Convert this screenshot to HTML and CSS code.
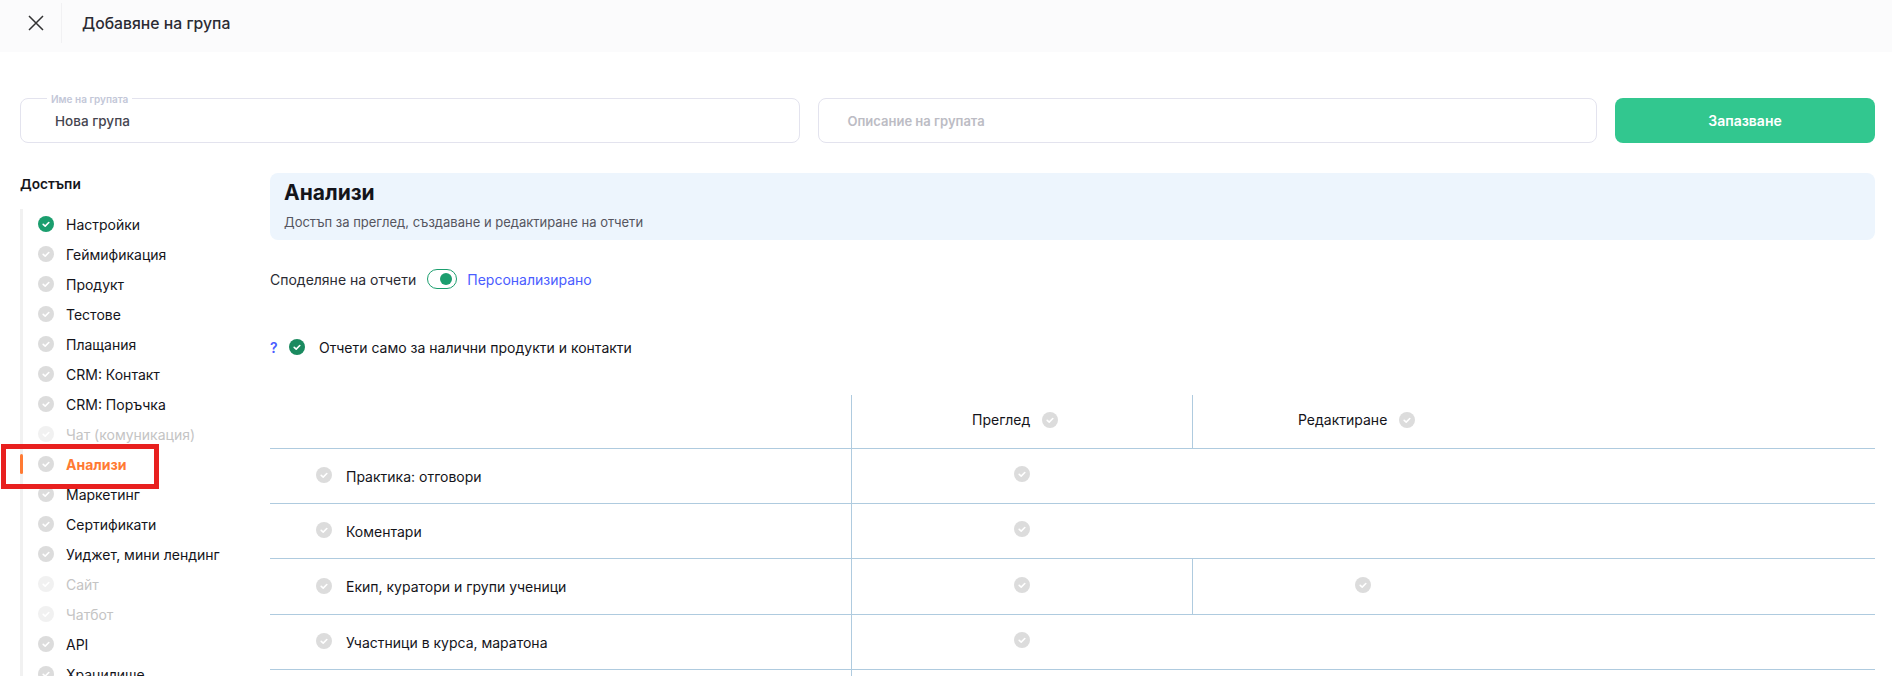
FILE: index.html
```html
<!DOCTYPE html>
<html>
<head>
<meta name="viewport" content="width=device-width, initial-scale=1">
<link rel="stylesheet" href="styles.css">
</head>
<body>

<svg class="defs" width="0" height="0">
  <symbol id="check" viewBox="0 0 16 16">
    <circle cx="8" cy="8" r="8" fill="currentColor"/>
    <path d="M5.2 8.3l2 1.8 3.6-3.6" fill="none" stroke="#fff" stroke-width="1.6" stroke-linecap="round" stroke-linejoin="round"/>
  </symbol>
</svg>

<header class="topbar">
  <div class="close">
    <svg width="16" height="16" viewBox="0 0 16 16"><path d="M1 1l14 14M15 1L1 15" fill="none" stroke="#333" stroke-width="1.5"/></svg>
  </div>
  <div class="topbar-title">Добавяне на група</div>
</header>

<div class="form-row">
  <div class="field">
    <span class="field-label">Име на групата</span>
    <span class="field-value">Нова група</span>
  </div>
  <div class="field">
    <span class="field-placeholder">Описание на групата</span>
  </div>
  <div class="save">Запазване</div>
</div>

<div class="main">
  <aside class="side">
    <div class="side-title">Достъпи</div>
    <ul class="side-list">
      <li><svg class="ic green"><use href="#check"/></svg>Настройки</li>
      <li><svg class="ic"><use href="#check"/></svg>Геймификация</li>
      <li><svg class="ic"><use href="#check"/></svg>Продукт</li>
      <li><svg class="ic"><use href="#check"/></svg>Тестове</li>
      <li><svg class="ic"><use href="#check"/></svg>Плащания</li>
      <li><svg class="ic"><use href="#check"/></svg>CRM: Контакт</li>
      <li><svg class="ic"><use href="#check"/></svg>CRM: Поръчка</li>
      <li class="off"><svg class="ic"><use href="#check"/></svg>Чат (комуникация)</li>
      <li class="active"><svg class="ic"><use href="#check"/></svg>Анализи</li>
      <li><svg class="ic"><use href="#check"/></svg>Маркетинг</li>
      <li><svg class="ic"><use href="#check"/></svg>Сертификати</li>
      <li><svg class="ic"><use href="#check"/></svg>Уиджет, мини лендинг</li>
      <li class="off"><svg class="ic"><use href="#check"/></svg>Сайт</li>
      <li class="off"><svg class="ic"><use href="#check"/></svg>Чатбот</li>
      <li><svg class="ic"><use href="#check"/></svg>API</li>
      <li><svg class="ic"><use href="#check"/></svg>Хранилище</li>
    </ul>
  </aside>

  <section class="content">
    <div class="panel">
      <h2>Анализи</h2>
      <p>Достъп за преглед, създаване и редактиране на отчети</p>
    </div>

    <div class="share">
      <span>Споделяне на отчети</span>
      <span class="toggle"><span class="knob"></span></span>
      <a class="link">Персонализирано</a>
    </div>

    <div class="only">
      <span class="hint">?</span>
      <svg class="ic dark"><use href="#check"/></svg>
      <span>Отчети само за налични продукти и контакти</span>
    </div>

    <div class="grid">
      <div class="row head">
        <div class="cell-name"></div>
        <div class="cell-a">Преглед <svg class="ic"><use href="#check"/></svg></div>
        <div class="cell-b">Редактиране <svg class="ic"><use href="#check"/></svg></div>
      </div>
      <div class="row">
        <div class="cell-name"><svg class="ic"><use href="#check"/></svg>Практика: отговори</div>
        <div class="cell-a"><svg class="ic"><use href="#check"/></svg></div>
      </div>
      <div class="row">
        <div class="cell-name"><svg class="ic"><use href="#check"/></svg>Коментари</div>
        <div class="cell-a"><svg class="ic"><use href="#check"/></svg></div>
      </div>
      <div class="row tall">
        <div class="cell-name"><svg class="ic"><use href="#check"/></svg>Екип, куратори и групи ученици</div>
        <div class="cell-a"><svg class="ic"><use href="#check"/></svg></div>
        <div class="cell-b"><svg class="ic"><use href="#check"/></svg></div>
      </div>
      <div class="row">
        <div class="cell-name"><svg class="ic"><use href="#check"/></svg>Участници в курса, маратона</div>
        <div class="cell-a"><svg class="ic"><use href="#check"/></svg></div>
      </div>
      <div class="row"><div class="cell-name"></div><div class="cell-a"></div></div>
    </div>
  </section>
</div>

<div class="annotation"></div>

</body>
</html>
```

FILE: styles.css
```css
* {
  box-sizing: border-box;
}

html, body {
  height: 100%;
  overflow: hidden;
}

body {
  margin: 0;
  background: #fff;
  color: #14141a;
  font-family: Inter, "Noto Sans", sans-serif;
  font-size: 14px;
}

.defs {
  position: absolute;
}

.topbar {
  display: flex;
  align-items: center;
  height: 52px;
  padding-bottom: 6px;
  background: #fbfbfc;
}

.close {
  display: flex;
  align-items: center;
  width: 62px;
  height: 40px;
  padding-left: 28px;
  border-right: 1px solid #f1f1f3;
}

.topbar-title {
  margin-left: 20px;
  font-size: 15.75px;
  font-weight: 500;
  color: #2b2b33;
}

.form-row {
  display: flex;
  gap: 18px;
  margin: 46px 17px 0 20px;
}

.field {
  position: relative;
  display: flex;
  align-items: center;
  flex: 1;
  height: 45px;
  padding: 0 34px;
  border: 1px solid #e3e3ee;
  border-radius: 8px;
  font-size: 13.5px;
}

.field-label {
  position: absolute;
  top: -6px;
  left: 26px;
  padding: 0 4px;
  background: #fff;
  color: #c3c7d8;
  font-size: 10px;
  font-weight: 600;
  line-height: 12px;
}

.field-value {
  color: #45454f;
  font-weight: 500;
}

.field-placeholder {
  margin-left: -5px;
  color: #bcbcc4;
  font-size: 13px;
  font-weight: 600;
}

.save {
  display: flex;
  align-items: center;
  justify-content: center;
  flex: none;
  width: 260px;
  height: 45px;
  border-radius: 8px;
  background: #32c78f;
  color: #fff;
  font-weight: 600;
}

.main {
  display: flex;
  height: 503px;
  margin: 30px 17px 0 20px;
  overflow: hidden;
}

.side {
  flex: none;
  width: 250px;
}

.side-title {
  margin-top: 3px;
  height: 28px;
  font-weight: 600;
  line-height: 17px;
  color: #14141a;
  font-size: 13.7px;
}

.side-list {
  margin: 5px 0 0;
  padding: 0;
  list-style: none;
  border-left: 3px solid #f1f1f1;
}

.side-list li {
  position: relative;
  display: flex;
  align-items: center;
  gap: 12px;
  height: 30px;
  padding-left: 15px;
  white-space: nowrap;
}

.side-list .off {
  color: #c4c4c4;
}

.side-list .active {
  color: #ff7a33;
  font-weight: 700;
}

/* Marker over the grey line of the list */
.side-list .active:before {
  content: "";
  position: absolute;
  left: -3px;
  top: 5px;
  width: 3px;
  height: 20px;
  border-radius: 2px;
  background: #ff7a33;
}

.ic {
  flex: none;
  width: 16px;
  height: 16px;
  color: #dcdcdc;
}

.off .ic {
  color: #f1f1f1;
}

.ic.green {
  color: #1b9e6e;
}

.ic.dark {
  color: #1a8a5f;
}

.content {
  flex: 1;
  min-width: 0;
}

.panel {
  height: 67px;
  padding: 7px 14px;
  border-radius: 8px;
  background: #edf5fd;
}

.panel h2 {
  margin: 0;
  font-size: 21px;
  font-weight: 700;
  line-height: 26px;
  color: #14141a;
}

.panel p {
  margin: 8px 0 0;
  font-size: 13px;
  line-height: 16px;
  color: #555560;
}

.share {
  display: flex;
  align-items: center;
  gap: 10px;
  height: 20px;
  margin-top: 29px;
  color: #2b2b33;
}

.toggle {
  display: flex;
  align-items: center;
  justify-content: flex-end;
  width: 30px;
  height: 20px;
  margin-left: 1px;
  padding-right: 4px;
  border: 1px solid #1b9e6e;
  border-radius: 10px;
}

.knob {
  width: 12px;
  height: 12px;
  border-radius: 50%;
  background: #1b9e6e;
}

.link {
  color: #4a5cff;
}

.only {
  display: flex;
  align-items: center;
  height: 18px;
  margin-top: 49px;
}

.hint {
  width: 19px;
  color: #4a5cff;
  font-weight: 600;
}

.only .ic {
  margin-right: 14px;
}

.grid {
  margin-top: 39px;
}

.row {
  display: flex;
  height: 55px;
  border-bottom: 1px solid #afcbdf;
}

.row.tall {
  height: 56px;
}

.head {
  height: 54px;
}

.cell-name {
  display: flex;
  align-items: center;
  gap: 14px;
  flex: none;
  width: 582px;
  padding-left: 46px;
  border-right: 1px solid #afcbdf;
}

.cell-name .ic {
  margin-top: -2px;
}

.cell-a, .cell-b {
  display: flex;
  align-items: center;
  justify-content: center;
  gap: 12px;
  flex: none;
  width: 340px;
  padding-bottom: 4px;
}

.cell-b {
  border-left: 1px solid #afcbdf;
}

.head .cell-a {
  justify-content: flex-start;
  padding-left: 120px;
}

.head .cell-b {
  justify-content: flex-start;
  padding-left: 105px;
}

.annotation {
  position: absolute;
  left: 1px;
  top: 444px;
  width: 158px;
  height: 45px;
  border: 5px solid #e8201f;
}
```
